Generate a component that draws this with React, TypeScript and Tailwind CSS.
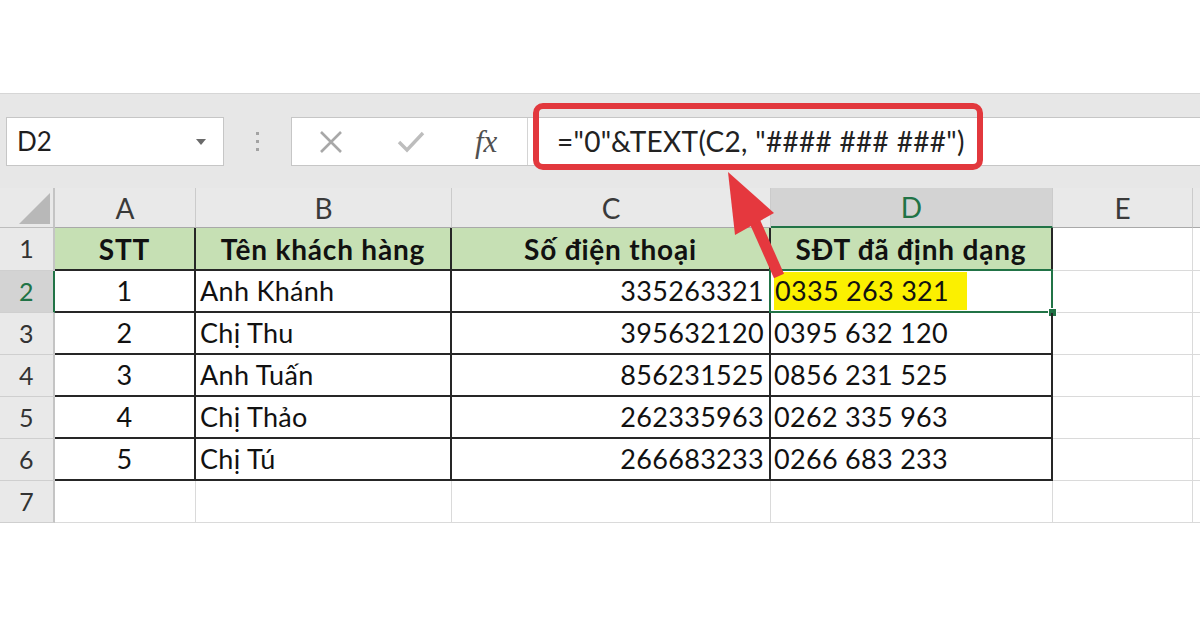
import React from 'react'

const FONT = "font-['Lato','Open_Sans',sans-serif]"

const COLS = [
  { key: 'A', w: 'w-[141px]' },
  { key: 'B', w: 'w-[256px]' },
  { key: 'C', w: 'w-[319px]' },
  { key: 'D', w: 'w-[282px]' },
  { key: 'E', w: 'w-[140px]' },
]

const ROWS = [
  { stt: '1', name: 'Anh Khánh', phone: '335263321', fmt: '0335 263 321' },
  { stt: '2', name: 'Chị Thu', phone: '395632120', fmt: '0395 632 120' },
  { stt: '3', name: 'Anh Tuấn', phone: '856231525', fmt: '0856 231 525' },
  { stt: '4', name: 'Chị Thảo', phone: '262335963', fmt: '0262 335 963' },
  { stt: '5', name: 'Chị Tú', phone: '266683233', fmt: '0266 683 233' },
]

function RowHeader({ n, active }: { n: number; active?: boolean }) {
  return (
    <div
      className={`w-[55px] shrink-0 flex items-center justify-center text-[25px] border-b border-[#cfcfcf] ${
        active
          ? 'bg-[#d3d3d3] text-[#217346] border-r-2 border-r-[#217346]'
          : 'bg-[#e9e9e9] text-[#333] border-r-2 border-r-[#c4c4c4]'
      }`}
    >
      {n}
    </div>
  )
}

export default function App() {
  return (
    <div className={`w-[1200px] h-[620px] bg-white overflow-hidden relative ${FONT}`}>
      {/* top blank */}
      <div className="h-[93px]" />

      {/* formula bar */}
      <div className="h-[95px] bg-[#e7e7e7] border-t border-[#d6d6d6] flex items-start pt-[23px]">
        {/* name box */}
        <div className="ml-[6px] w-[218px] h-[49px] bg-white border border-[#c6c6c6] flex items-center justify-between pl-[10px] pr-[17px]">
          <span className="text-[26px] text-[#1e1e1e]">D2</span>
          <svg width="10" height="6" viewBox="0 0 10 6">
            <polygon points="0,0 10,0 5,6" fill="#6a6a6a" />
          </svg>
        </div>

        {/* grip dots */}
        <div className="w-[67px] h-[49px] flex flex-col items-center justify-center gap-[5px]">
          <span className="w-[3px] h-[3px] bg-[#a3a3a3]" />
          <span className="w-[3px] h-[3px] bg-[#a3a3a3]" />
          <span className="w-[3px] h-[3px] bg-[#a3a3a3]" />
        </div>

        {/* icons + formula input */}
        <div className="flex-1 h-[49px] bg-white border border-[#c6c6c6] border-r-0 flex relative">
          <div className="w-[236px] shrink-0 flex items-center border-r border-[#d4d4d4]">
            <svg width="24" height="24" viewBox="0 0 24 24" className="ml-[27px]">
              <path d="M2 2 L22 22 M22 2 L2 22" stroke="#a8a8a8" strokeWidth="2.6" />
            </svg>
            <svg width="28" height="24" viewBox="0 0 28 24" className="ml-[54px]">
              <path d="M2 12 L10 20 L26 3" stroke="#bdbdbd" strokeWidth="3.4" fill="none" />
            </svg>
            <span className="ml-[50px] font-['Liberation_Serif',serif] italic text-[31px] text-[#505050] leading-none">
              fx
            </span>
          </div>
          <div className="flex-1" />

          {/* red highlight round the formula */}
          <div className="absolute left-[241px] top-[-15px] w-[450px] h-[67px] border-[6px] border-[#e2383d] rounded-[10px] flex items-center pl-[18px] pt-[8px]">
            <span className="text-[28px] text-[#222] whitespace-pre tracking-[0.3px]">
              ="0"&amp;TEXT(C2, "#### ### ###")
            </span>
          </div>
        </div>
      </div>

      {/* column headers */}
      <div className="flex h-[40px]">
        <div className="w-[55px] shrink-0 bg-[#e9e9e9] border-r-2 border-[#c4c4c4] border-b border-b-[#bdbdbd] flex items-end justify-end pb-[3px] pr-[3px]">
          <svg width="31" height="31" viewBox="0 0 31 31">
            <polygon points="31,0 31,31 0,31" fill="#b8b8b8" />
          </svg>
        </div>
        {COLS.map((c) => (
          <div
            key={c.key}
            className={`${c.w} shrink-0 flex items-center justify-center text-[28px] border-r border-[#cbcbcb] ${
              c.key === 'D'
                ? 'bg-[#d3d3d3] text-[#217346] border-b-2 border-b-[#217346]'
                : 'bg-[#e9e9e9] text-[#3a3a3a] border-b border-b-[#a9a9a9]'
            }`}
          >
            {c.key}
          </div>
        ))}
        <div className="flex-1 bg-[#e9e9e9] border-b border-[#a9a9a9]" />
      </div>

      {/* row 1: headings */}
      <div className="flex h-[43px]">
        <RowHeader n={1} />
        {['STT', 'Tên khách hàng', 'Số điện thoại', 'SĐT đã định dạng'].map((t, i) => (
          <div
            key={t}
            className={`${COLS[i].w} shrink-0 bg-[#c6e0b4] border-r-2 border-b-2 border-[#262626] flex items-center justify-center font-bold text-[28px] tracking-[0.8px] text-[#111]`}
          >
            {t}
          </div>
        ))}
        <div className="w-[140px] shrink-0 border-r border-b border-[#dadada]" />
        <div className="flex-1 border-b border-[#dadada]" />
      </div>

      {/* data rows */}
      {ROWS.map((r, idx) => (
        <div key={r.stt} className="flex h-[42px] text-[27px] tracking-[0.3px] text-[#111]">
          <RowHeader n={idx + 2} active={idx === 0} />
          <div className="w-[141px] shrink-0 border-r-2 border-b-2 border-[#262626] flex items-center justify-center">
            {r.stt}
          </div>
          <div className="w-[256px] shrink-0 border-r-2 border-b-2 border-[#262626] flex items-center pl-[4px]">
            {r.name}
          </div>
          <div className="w-[319px] shrink-0 border-r-2 border-b-2 border-[#262626] flex items-center justify-end pr-[5px]">
            {r.phone}
          </div>
          <div className="w-[282px] shrink-0 border-r-2 border-b-2 border-[#262626] flex items-center pl-[3px] relative">
            {idx === 0 ? (
              <span className="bg-[#fbf000] w-[193px] h-[38px] flex items-center pl-[1px]">{r.fmt}</span>
            ) : (
              r.fmt
            )}
            {idx === 0 && (
              <div className="absolute left-[-2px] top-[-2px] right-[-2px] bottom-[-2px] border-2 border-[#217346]">
                <div className="absolute right-[-6px] bottom-[-6px] w-[9px] h-[9px] bg-[#217346] border border-white" />
              </div>
            )}
          </div>
          <div className="w-[140px] shrink-0 border-r border-b border-[#dadada]" />
          <div className="flex-1 border-b border-[#dadada]" />
        </div>
      ))}

      {/* row 7: empty */}
      <div className="flex h-[42px]">
        <RowHeader n={7} />
        {COLS.map((c) => (
          <div key={c.key} className={`${c.w} shrink-0 border-r border-b border-[#dadada]`} />
        ))}
        <div className="flex-1 border-b border-[#dadada]" />
      </div>

      {/* red arrow pointing at the formula */}
      <svg className="absolute left-0 top-0 pointer-events-none" width="1200" height="620">
        <line x1="755" y1="222" x2="779" y2="276" stroke="#e5383e" strokeWidth="11" />
        <polygon points="728,172 735,235 774,213" fill="#e5383e" />
      </svg>
    </div>
  )
}
